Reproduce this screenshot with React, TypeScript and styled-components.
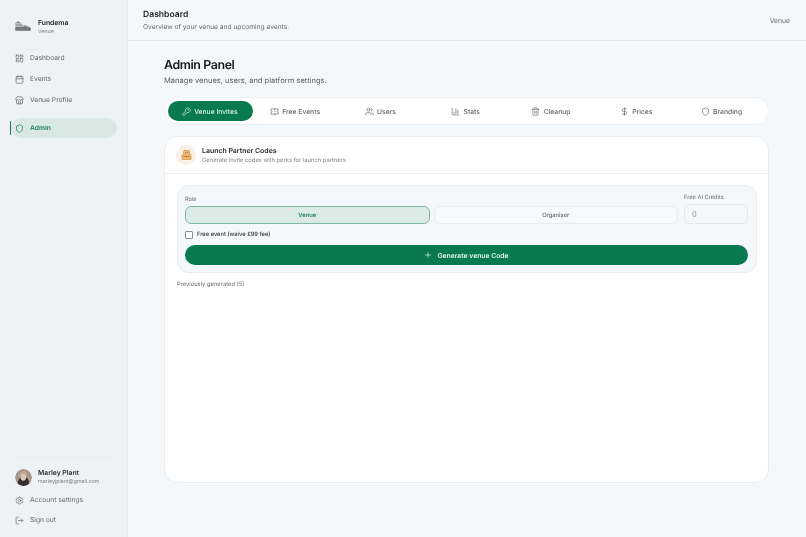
import styled, { createGlobalStyle } from 'styled-components';
import {
  Calendar,
  ChartColumn,
  DollarSign,
  KeyRound,
  LayoutDashboard,
  LogOut,
  Plus,
  Settings,
  Shield,
  Store,
  Ticket,
  Trash2,
  Users,
} from 'lucide-react';

const GlobalStyle = createGlobalStyle`
  html, body {
    margin: 0;
    padding: 0;
    height: 100%;
    background: #f5f8fb;
    font-family: Inter, "Liberation Sans", sans-serif;
    text-rendering: geometricPrecision;
  }
  * {
    box-sizing: border-box;
  }
`;

const navItems = [
  { label: 'Dashboard', icon: LayoutDashboard },
  { label: 'Events', icon: Calendar },
  { label: 'Venue Profile', icon: Store },
];

const tabs = [
  { label: 'Venue Invites', icon: KeyRound, active: true },
  { label: 'Free Events', icon: Ticket },
  { label: 'Users', icon: Users },
  { label: 'Stats', icon: ChartColumn },
  { label: 'Cleanup', icon: Trash2 },
  { label: 'Prices', icon: DollarSign },
  { label: 'Branding', icon: Shield },
];

const VenueLogo = () => (
  <svg width="16" height="11" viewBox="0 0 16 11">
    <path d="M0.500 10.500V3L3 1l3 2 2 2.500h3L15.500 7.500v3z" fill="#8b8f93" />
    <path d="M0.500 7.500h10l5 1v2H0.500z" fill="#55595d" />
    <path d="M1 3.500h5M1 5h6M1 6.500h8M1 9h13" stroke="#e6e9ec" strokeWidth="0.500" />
  </svg>
);

const AvatarArt = () => (
  <svg width="17" height="17" viewBox="0 0 17 17">
    <circle cx="8.500" cy="8.500" r="8.500" fill="#a8968c" />
    <path d="M2.500 17c0-4 1-9 6-9s6 5 6 9z" fill="#33302f" />
    <ellipse cx="8.300" cy="8" rx="2.800" ry="3.800" fill="#dcc8ba" />
    <path d="M4.500 9c-.5-4.500 1.500-6.500 4-6.500s4.500 2 4 6.500c-.5-2.500-1.500-4-4-4s-3.500 1.500-4 4z" fill="#c4ab98" />
  </svg>
);

const PartnerIcon = () => (
  <svg width="11" height="10" viewBox="0 0 11 10">
    <path d="M1 9.500V5l1.500-1V1.500A1 1 0 0 1 3.500.5h4a1 1 0 0 1 1 1V4L10 5v4.500z" fill="#eab676" stroke="#d9964a" strokeWidth="0.700" />
    <path d="M4 2.500h1M6 2.500h1M2.500 6.500h6" stroke="#b9772f" strokeWidth="0.900" />
  </svg>
);

export default function App() {
  return (
    <Shell>
      <GlobalStyle />
      <Sidebar>
        <Brand>
          <BrandMark>
            <VenueLogo />
          </BrandMark>
          <div>
            <BrandName>Fundema</BrandName>
            <BrandRole>Venue</BrandRole>
          </div>
        </Brand>
        <Nav>
          {navItems.map((item) => (
            <NavItem key={item.label}>
              <item.icon size={9} strokeWidth={1.8} />
              {item.label}
            </NavItem>
          ))}
        </Nav>
        <NavDivider />
        <ActiveRow>
          <ActiveMark />
          <ActiveItem>
            <Shield size={9} strokeWidth={2} />
            Admin
          </ActiveItem>
        </ActiveRow>
        <SidebarFooter>
          <Profile>
            <Avatar>
              <AvatarArt />
            </Avatar>
            <div>
              <ProfileName>Marley Plant</ProfileName>
              <ProfileMail>marleyjplant@gmail.com</ProfileMail>
            </div>
          </Profile>
          <NavItem>
            <Settings size={9} strokeWidth={1.8} />
            Account settings
          </NavItem>
          <NavItem>
            <LogOut size={9} strokeWidth={1.8} />
            Sign out
          </NavItem>
        </SidebarFooter>
      </Sidebar>
      <Main>
        <TopBar>
          <div>
            <TopTitle>Dashboard</TopTitle>
            <TopSubtitle>Overview of your venue and upcoming events.</TopSubtitle>
          </div>
          <TopRole>Venue</TopRole>
        </TopBar>
        <Content>
          <PageTitle>Admin Panel</PageTitle>
          <PageSubtitle>Manage venues, users, and platform settings.</PageSubtitle>
          <TabBar>
            {tabs.map((tab) => (
              <TabItem key={tab.label} $active={tab.active}>
                <tab.icon size={9} strokeWidth={1.8} />
                {tab.label}
              </TabItem>
            ))}
          </TabBar>
          <Card>
            <CardHeader>
              <IconBadge>
                <PartnerIcon />
              </IconBadge>
              <CardHeading>
                <CardTitle>Launch Partner Codes</CardTitle>
                <CardSubtitle>Generate invite codes with perks for launch partners</CardSubtitle>
              </CardHeading>
            </CardHeader>
            <CardBody>
              <FormPanel>
                <RoleRow>
                  <RoleColumn>
                    <FieldLabel>Role</FieldLabel>
                    <RoleButtons>
                      <RoleButton $active>Venue</RoleButton>
                      <RoleButton>Organiser</RoleButton>
                    </RoleButtons>
                  </RoleColumn>
                  <CreditsColumn>
                    <FieldLabel>Free AI Credits</FieldLabel>
                    <CreditsInput placeholder="0" />
                  </CreditsColumn>
                </RoleRow>
                <CheckRow>
                  <CheckBox />
                  Free event (waive £99 fee)
                </CheckRow>
                <GenerateButton>
                  <Plus size={8} strokeWidth={2} />
                  Generate venue Code
                </GenerateButton>
              </FormPanel>
              <PreviousLabel>Previously generated (5)</PreviousLabel>
            </CardBody>
          </Card>
        </Content>
      </Main>
    </Shell>
  );
}

const Shell = styled.div`
  display: flex;
  width: 806px;
  height: 537px;
  overflow: hidden;
  will-change: transform;
`;

const Sidebar = styled.aside`
  width: 128px;
  flex-shrink: 0;
  display: flex;
  flex-direction: column;
  background: #eff2f5;
  border-right: 1px solid #e5e9ed;
  padding: 16px 10px 7px;
`;

const Brand = styled.div`
  display: flex;
  align-items: center;
  gap: 7px;
  padding-left: 5px;
  height: 20px;
  margin-bottom: 12px;
`;

const BrandMark = styled.span`
  display: flex;
  margin-bottom: 2px;
`;

const BrandName = styled.div`
  font-size: 6.800px;
  font-weight: 600;
  line-height: 11px;
  color: #1f2328;
`;

const BrandRole = styled.div`
  font-size: 5.300px;
  line-height: 8px;
  color: #7b8187;
`;

const Nav = styled.nav`
  display: flex;
  flex-direction: column;
  gap: 1px;
`;

const NavItem = styled.div`
  display: flex;
  align-items: center;
  gap: 6px;
  height: 20px;
  padding-left: 5px;
  font-size: 6.700px;
  color: #62686e;
`;

const NavDivider = styled.div`
  height: 1px;
  margin: 3px 0 4px;
  background: #ebeef1;
`;

const ActiveRow = styled.div`
  display: flex;
  align-items: center;
`;

const ActiveMark = styled.div`
  width: 1px;
  height: 14px;
  background: #157a52;
`;

const ActiveItem = styled.div`
  flex: 1;
  display: flex;
  align-items: center;
  gap: 6px;
  height: 20px;
  padding-left: 4px;
  border-radius: 10px;
  background: #d9e8e3;
  font-size: 6.700px;
  font-weight: 600;
  color: #1c8159;
`;

const SidebarFooter = styled.div`
  margin-top: auto;
  border-top: 1px solid #ebeef1;
  padding-top: 9px;
  display: flex;
  flex-direction: column;
`;

const Profile = styled.div`
  display: flex;
  align-items: center;
  gap: 6px;
  padding-left: 5px;
  height: 22px;
  margin-bottom: 2px;
`;

const Avatar = styled.div`
  width: 17px;
  height: 17px;
  border-radius: 50%;
  overflow: hidden;
  flex-shrink: 0;
`;

const ProfileName = styled.div`
  font-size: 6.800px;
  font-weight: 600;
  line-height: 10px;
  color: #2a2e33;
`;

const ProfileMail = styled.div`
  font-size: 5.300px;
  line-height: 8px;
  color: #7b8187;
`;

const Main = styled.main`
  flex: 1;
  display: flex;
  flex-direction: column;
  min-width: 0;
`;

const TopBar = styled.header`
  height: 41px;
  flex-shrink: 0;
  display: flex;
  align-items: center;
  justify-content: space-between;
  padding: 1px 16px 0 15px;
  background: #f5f8fb;
  border-bottom: 1px solid #e5e9ed;
`;

const TopTitle = styled.div`
  font-size: 8.600px;
  font-weight: 600;
  line-height: 13px;
  color: #1e2226;
`;

const TopSubtitle = styled.div`
  font-size: 6.650px;
  line-height: 11px;
  color: #62686e;
`;

const TopRole = styled.div`
  font-size: 6.800px;
  color: #62686e;
`;

const Content = styled.div`
  padding: 15px 37px 0 36px;
`;

const PageTitle = styled.h1`
  margin: 0;
  font-size: 12.400px;
  font-weight: 600;
  line-height: 17px;
  letter-spacing: -0.4px;
  color: #15181c;
`;

const PageSubtitle = styled.p`
  margin: 2px 0 11px;
  font-size: 7.570px;
  line-height: 11px;
  color: #5c6268;
`;

const TabBar = styled.div`
  display: grid;
  grid-template-columns: repeat(7, 1fr);
  height: 28px;
  padding: 3px;
  background: #ffffff;
  border: 1px solid #edf0f3;
  border-radius: 14px;
`;

const TabItem = styled.div<{ $active?: boolean }>`
  display: flex;
  align-items: center;
  justify-content: center;
  gap: 3.500px;
  padding-right: 2px;
  border-radius: 10px;
  font-size: 6.750px;
  font-weight: 500;
  background: ${(p) => (p.$active ? '#097a4f' : 'transparent')};
  color: ${(p) => (p.$active ? '#d8efe5' : '#62686e')};
`;

const Card = styled.section`
  height: 347px;
  margin-top: 11px;
  background: #ffffff;
  border: 1px solid #e9edf0;
  border-radius: 14px;
`;

const CardHeader = styled.div`
  height: 37px;
  display: flex;
  align-items: center;
  gap: 6px;
  padding: 0 11px 1px;
  border-bottom: 1px solid #edf0f3;
`;

const IconBadge = styled.div`
  width: 20px;
  height: 20px;
  display: flex;
  align-items: center;
  justify-content: center;
  border-radius: 50%;
  background: #f8efe6;
`;

const CardHeading = styled.div`
  padding-top: 2px;
`;

const CardTitle = styled.div`
  font-size: 6.950px;
  font-weight: 600;
  line-height: 10px;
  color: #24282c;
`;

const CardSubtitle = styled.div`
  font-size: 5.800px;
  line-height: 9px;
  color: #7b8187;
`;

const CardBody = styled.div`
  padding: 11px 11px 12px 12px;
`;

const FormPanel = styled.div`
  height: 88px;
  padding: 7px 8px 8px 7px;
  background: #f5f8fb;
  border: 1px solid #e9edf0;
  border-radius: 12px;
`;

const RoleRow = styled.div`
  display: flex;
  gap: 6px;
`;

const RoleColumn = styled.div`
  flex: 1;
  padding-top: 2px;
`;

const CreditsColumn = styled.div`
  width: 64px;
`;

const FieldLabel = styled.div`
  font-size: 5.700px;
  line-height: 9px;
  color: #62686e;
  margin-bottom: 2px;
`;

const RoleButtons = styled.div`
  display: grid;
  grid-template-columns: 1fr 1fr;
  gap: 4px;
  margin-top: 2px;
`;

const RoleButton = styled.div<{ $active?: boolean }>`
  height: 18px;
  display: flex;
  align-items: center;
  justify-content: center;
  border-radius: 6px;
  font-size: 5.800px;
  font-weight: ${(p) => (p.$active ? 600 : 500)};
  border: 1px solid ${(p) => (p.$active ? '#7fb8a1' : '#e9edf0')};
  background: ${(p) => (p.$active ? '#dcebe6' : '#f7fafc')};
  color: ${(p) => (p.$active ? '#1c8159' : '#62686e')};
`;

const CreditsInput = styled.input`
  display: block;
  width: 64px;
  height: 20px;
  padding: 0 7px;
  border: 1px solid #e3e7ea;
  border-radius: 6px;
  background: #f5f8fb;
  font-family: inherit;
  font-size: 7.500px;
  outline: none;
  &::placeholder {
    color: #8f959a;
  }
`;

const CheckRow = styled.div`
  display: flex;
  align-items: center;
  gap: 4px;
  margin-top: 6px;
  height: 9px;
  font-size: 5.760px;
  font-weight: 500;
  color: #2e3237;
`;

const CheckBox = styled.div`
  width: 8px;
  height: 8px;
  background: #ffffff;
  border: 1px solid #8a8f94;
  border-radius: 1px;
`;

const GenerateButton = styled.div`
  height: 20px;
  margin-top: 6px;
  display: flex;
  align-items: center;
  justify-content: center;
  gap: 5px;
  border-radius: 10px;
  background: #097a4f;
  color: #e2f3ea;
  font-size: 6.800px;
  font-weight: 600;
`;

const PreviousLabel = styled.div`
  margin-top: 8px;
  font-size: 5.800px;
  line-height: 8px;
  color: #62686e;
`;
